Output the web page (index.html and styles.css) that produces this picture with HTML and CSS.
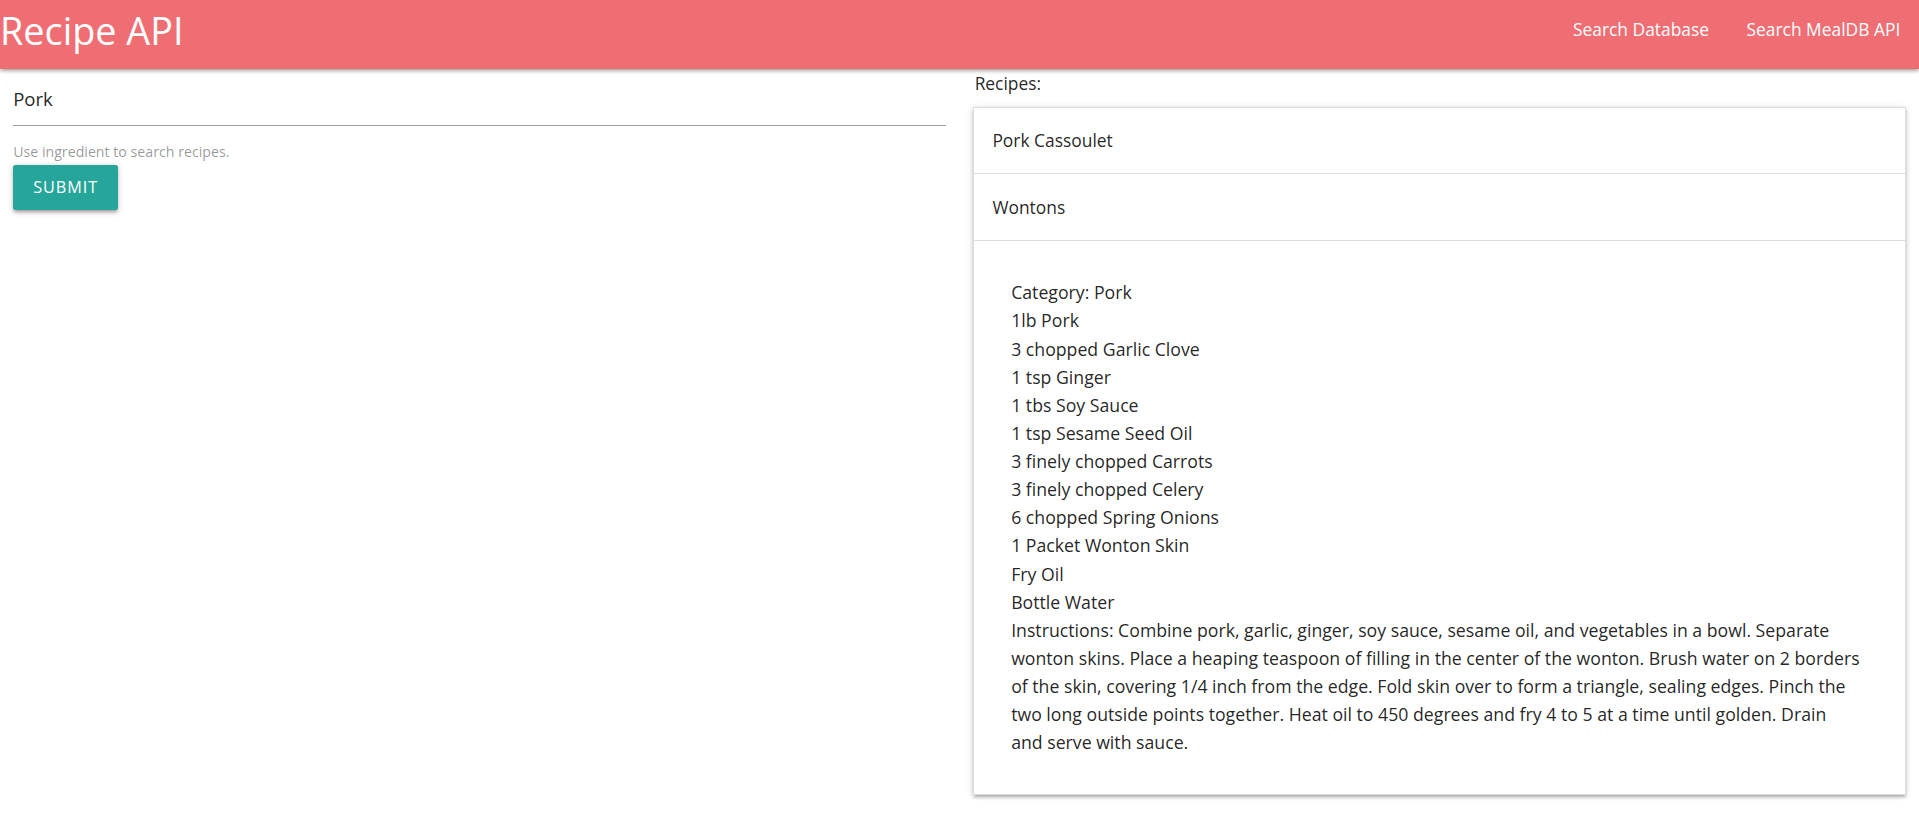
FILE: index.html
```html
<!DOCTYPE html>
<html lang="en">
<head>
<meta charset="utf-8">
<title>Recipe API</title>
<link rel="stylesheet" href="styles.css">
</head>
<body>
<nav class="nav">
  <a class="brand" href="#">Recipe API</a>
  <ul class="nav-links">
    <li><a href="#">Search Database</a></li>
    <li><a href="#">Search MealDB API</a></li>
  </ul>
</nav>
<main class="row">
  <section class="col">
    <form class="search-form">
      <div class="input-field">
        <input class="text-input" type="text" value="Pork">
        <span class="helper-text">Use ingredient to search recipes.</span>
      </div>
      <button class="btn" type="button">Submit</button>
    </form>
  </section>
  <section class="col">
    <p class="list-label">Recipes:</p>
    <ul class="collapsible">
      <li class="collapsible-item">
        <div class="collapsible-header">Pork Cassoulet</div>
      </li>
      <li class="collapsible-item">
        <div class="collapsible-header">Wontons</div>
        <div class="collapsible-body">
          <p>Category: Pork</p>
          <p>1lb Pork</p>
          <p>3 chopped Garlic Clove</p>
          <p>1 tsp Ginger</p>
          <p>1 tbs Soy Sauce</p>
          <p>1 tsp Sesame Seed Oil</p>
          <p>3 finely chopped Carrots</p>
          <p>3 finely chopped Celery</p>
          <p>6 chopped Spring Onions</p>
          <p>1 Packet Wonton Skin</p>
          <p>Fry Oil</p>
          <p>Bottle Water</p>
          <p>Instructions: Combine pork, garlic, ginger, soy sauce, sesame oil, and vegetables in a bowl. Separate<br>wonton skins. Place a heaping teaspoon of filling in the center of the wonton. Brush water on 2 borders<br>of the skin, covering 1/4 inch from the edge. Fold skin over to form a triangle, sealing edges. Pinch the<br>two long outside points together. Heat oil to 450 degrees and fry 4 to 5 at a time until golden. Drain<br>and serve with sauce.</p>
        </div>
      </li>
    </ul>
  </section>
</main>
</body>
</html>
```

FILE: styles.css
```css
* {
  box-sizing: border-box;
}

html, body {
  margin: 0;
  padding: 0;
  background: #ffffff;
}

body {
  font-family: "Open Sans", "Noto Sans", sans-serif;
  font-size: 17.4px;
  line-height: 28.125px;
  color: rgba(0, 0, 0, 0.87);
}

.nav {
  display: flex;
  justify-content: space-between;
  align-items: flex-start;
  height: 69px;
  background: #ef6e73;
  box-shadow: 0 2.5px 2.5px 0 rgba(0, 0, 0, 0.14), 0 3.75px 1.25px -2.5px rgba(0, 0, 0, 0.12), 0 1.25px 6.25px 0 rgba(0, 0, 0, 0.2);
  position: relative;
  z-index: 1;
}

.brand {
  color: #ffffff;
  text-decoration: none;
  font-size: 37.8px;
  line-height: 61px;
}

.nav-links {
  display: flex;
  list-style: none;
  margin: 0;
  padding: 0;
}

.nav-links a {
  display: block;
  padding: 0 18.75px;
  color: #ffffff;
  text-decoration: none;
  font-size: 17.4px;
  line-height: 59px;
}

.row {
  display: flex;
}

.col {
  flex: 0 0 50%;
  padding: 0 13.125px;
}

.search-form {
  display: flex;
  flex-direction: column;
  align-items: flex-start;
}

.input-field {
  width: 100%;
  display: flex;
  flex-direction: column;
}

.text-input {
  width: 100%;
  height: 57px;
  margin: 0;
  padding: 3px 0 0;
  border: none;
  border-bottom: 1px solid #9e9e9e;
  outline: none;
  background: transparent;
  font-family: inherit;
  font-size: 18.5px;
  color: rgba(0, 0, 0, 0.87);
}

.helper-text {
  margin-top: 15px;
  font-size: 14.2px;
  line-height: 22px;
  color: rgba(0, 0, 0, 0.42);
}

.btn {
  margin-top: 2px;
  height: 45px;
  padding: 0 20px;
  border: none;
  border-radius: 2.5px;
  background: #26a69a;
  color: #ffffff;
  font-family: inherit;
  font-size: 16.2px;
  line-height: 45px;
  letter-spacing: 1px;
  text-transform: uppercase;
  box-shadow: 0 2.5px 2.5px 0 rgba(0, 0, 0, 0.14), 0 3.75px 1.25px -2.5px rgba(0, 0, 0, 0.12), 0 1.25px 6.25px 0 rgba(0, 0, 0, 0.2);
}

.list-label {
  margin: 0;
  padding-left: 2px;
}

.collapsible {
  list-style: none;
  margin: 9.4px 0 18.75px;
  padding: 0;
  border-top: 1px solid #dddddd;
  border-left: 1px solid #dddddd;
  border-right: 1px solid #dddddd;
  box-shadow: 0 2.5px 2.5px 0 rgba(0, 0, 0, 0.14), 0 3.75px 1.25px -2.5px rgba(0, 0, 0, 0.12), 0 1.25px 6.25px 0 rgba(0, 0, 0, 0.2);
}

.collapsible-header {
  padding: 18.75px;
  border-bottom: 1px solid #dddddd;
  background: #ffffff;
}

.collapsible-body {
  padding: 37.5px;
  border-bottom: 1px solid #dddddd;
  font-size: 17.7px;
}

.collapsible-body p {
  margin: 0;
}
```
